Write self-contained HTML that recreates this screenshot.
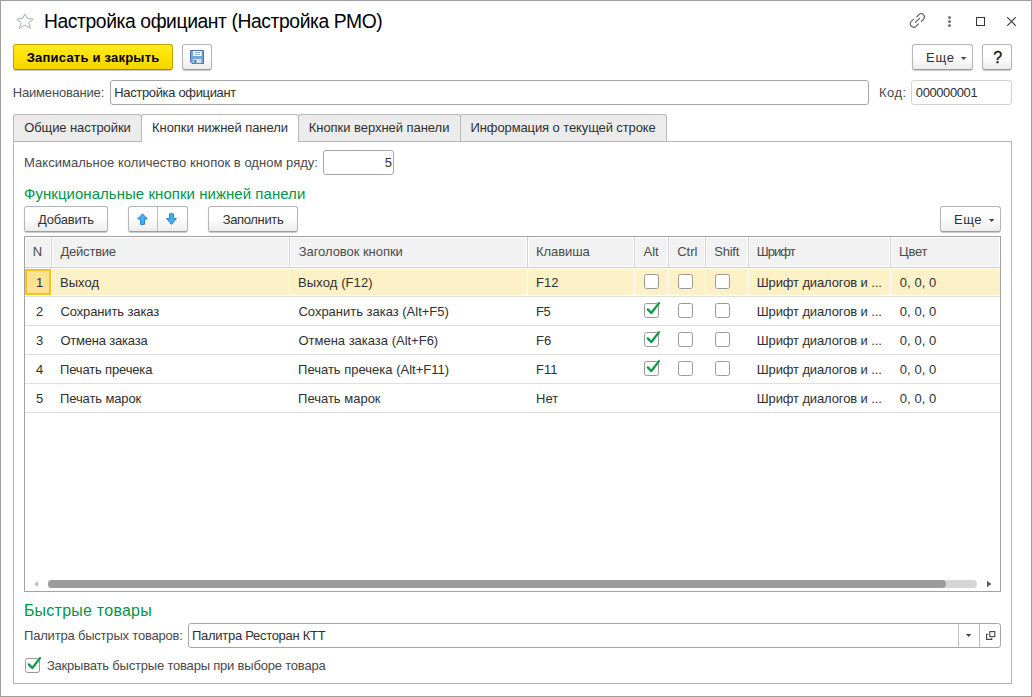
<!DOCTYPE html>
<html lang="ru">
<head>
<meta charset="utf-8">
<title>Настройка официант (Настройка РМО)</title>
<style>
*{box-sizing:border-box;margin:0;padding:0}
html,body{width:1032px;height:697px;overflow:hidden;background:#fff}
body{font-family:"Liberation Sans",Arial,sans-serif;font-size:13px;color:#333;position:relative}
.abs{position:absolute}
.t{position:absolute;white-space:nowrap}
#win{position:absolute;left:0;top:0;width:1032px;height:697px;border:1px solid #a0a0a0;background:#fff}
.btn{position:absolute;border:1px solid #b5b5b5;border-bottom-color:#9d9d9d;border-radius:3px;background:linear-gradient(#fff,#fff 45%,#ececec);box-shadow:0 1px 1px rgba(0,0,0,.22)}
.btn.yellow{background:linear-gradient(#ffea22,#ffe000 50%,#f6d500);border-color:#bfa500;border-bottom-color:#a08a00}
.inp{position:absolute;height:25px;border:1px solid #a6a6a6;border-radius:3px;background:#fff}
.tab{position:absolute;top:114px;height:27px;border:1px solid #b9b9b9;border-bottom:none;border-radius:3px 3px 0 0;background:#ececec}
.tab.act{background:#fff;height:28px}
#panel{position:absolute;left:13px;top:141px;width:999px;height:543px;border:1px solid #b4b4b4;background:#fff}
#tbl{position:absolute;left:24px;top:236px;width:977px;height:356px;border:1px solid #a3a3a3;background:#fff}
.cb{position:absolute;width:15px;height:15px;border:1px solid #999;border-radius:2.5px;background:#fff}
</style>
</head>
<body>
<div id="win"></div>
<svg class="abs" style="left:12px;top:8px" width="28" height="26" viewBox="0 0 28 26"><path d="M12.9 5.9L15 10.2L21.3 11.2L16.6 14.7L18.5 20.4L12.9 17L7.4 20.4L9.3 14.7L4.8 11.2L10.9 10.2Z" fill="#fff" stroke="#a7b0ba" stroke-width="1" stroke-linejoin="miter"/></svg>
<div class="t" style="left:44.02px;top:10px;font-size:19.3px;line-height:24px;color:#000;letter-spacing:-0.397px;">Настройка официант (Настройка РМО)</div>
<svg class="abs" style="left:906px;top:10px" width="24" height="22" viewBox="0 0 24 22" fill="none" stroke="#555" stroke-width="1.05" stroke-linecap="round"><path d="M10.7 6.8L13.2 4.3A3.3 3.3 0 0 1 17.8 8.9L15.3 11.4"/><path d="M7.4 9.3L5.2 11.5A3.4 3.4 0 0 0 10 16.3L12.4 13.9"/><path d="M9.4 12.4L13.5 8.3"/></svg>
<div class="abs" style="left:948px;top:16px;width:3px;height:3px;border-radius:2px;background:#777;box-shadow:0 4px 0 #777,0 8px 0 #777"></div>
<div class="abs" style="left:976px;top:17px;width:9px;height:9px;border:1px solid #333"></div>
<svg class="abs" style="left:1007px;top:17px" width="9" height="9" viewBox="0 0 9 9"><path d="M.2.2l8.6 8.6M8.8.2L.2 8.8" stroke="#333" stroke-width="1.1"/></svg>
<div class="btn yellow" style="left:13px;top:44px;width:160px;height:26px"></div>
<div class="t" style="left:26.71px;top:50px;font-size:13px;line-height:16px;color:#000;letter-spacing:0.219px;font-weight:bold;">Записать и закрыть</div>
<div class="btn" style="left:182px;top:44px;width:30px;height:26px"></div>
<svg class="abs" style="left:190px;top:50px" width="14" height="14" viewBox="0 0 14 14"><path d="M.5.5h13v13H2.2L.5 11.8z" fill="#79a5de" stroke="#3565a8" stroke-width=".9"/><rect x="3" y="1" width="8.5" height="5" fill="#fff"/><path d="M4.5 2.5h5.5M4.5 4.3h5.5" stroke="#7ba3d8" stroke-width="0.9"/><rect x="3.3" y="9" width="8" height="4.2" fill="#d9e0dc"/><rect x="4.3" y="10" width="2" height="3" fill="#3a74bd"/></svg>
<div class="btn" style="left:912px;top:44px;width:61px;height:26px"></div>
<div class="t" style="left:926.03px;top:50px;font-size:13px;line-height:16px;color:#303030;letter-spacing:0.724px;">Еще</div>
<svg class="abs" style="left:960px;top:57px" width="8" height="4" viewBox="0 0 8 4"><path d="M0.9 0H6.4L3.65 3.1z" fill="#444"/></svg>
<div class="btn" style="left:982px;top:44px;width:30px;height:26px"></div>
<div class="t" style="left:993.14px;top:48px;font-size:16px;line-height:20px;color:#111;-webkit-text-stroke:.3px #111;">?</div>
<div class="t" style="left:12.78px;top:85px;font-size:13px;line-height:16px;color:#4a4a4a;letter-spacing:-0.185px;">Наименование:</div>
<div class="inp" style="left:110px;top:80px;width:759px"></div>
<div class="t" style="left:114.23px;top:85px;font-size:13px;line-height:16px;color:#303030;letter-spacing:-0.344px;">Настройка официант</div>
<div class="t" style="left:879.03px;top:85px;font-size:13px;line-height:16px;color:#4a4a4a;letter-spacing:0.468px;">Код:</div>
<div class="inp" style="left:911px;top:80px;width:101px;border-color:#d2d2d2"></div>
<div class="t" style="left:915.84px;top:85px;font-size:13px;line-height:16px;color:#303030;letter-spacing:-0.410px;">000000001</div>
<div id="panel"></div>
<div class="tab" style="left:13px;width:129px"></div>
<div class="tab act" style="left:141px;width:158px"></div>
<div class="tab" style="left:298px;width:163px"></div>
<div class="tab" style="left:460px;width:207px"></div>
<div class="t" style="left:24.23px;top:120px;font-size:13px;line-height:16px;color:#303030;letter-spacing:-0.095px;">Общие настройки</div>
<div class="t" style="left:152.03px;top:120px;font-size:13px;line-height:16px;color:#303030;letter-spacing:-0.061px;">Кнопки нижней панели</div>
<div class="t" style="left:308.78px;top:120px;font-size:13px;line-height:16px;color:#303030;letter-spacing:-0.044px;">Кнопки верхней панели</div>
<div class="t" style="left:470.53px;top:120px;font-size:13px;line-height:16px;color:#303030;letter-spacing:-0.106px;">Информация о текущей строке</div>
<div class="t" style="left:24.03px;top:155px;font-size:13px;line-height:16px;color:#4a4a4a;letter-spacing:0.028px;">Максимальное количество кнопок в одном ряду:</div>
<div class="inp" style="left:323px;top:150px;width:71px"></div>
<div class="t" style="left:384.83px;top:155px;font-size:13px;line-height:16px;color:#303030;">5</div>
<div class="t" style="left:23.99px;top:184px;font-size:15px;line-height:20px;color:#009646;letter-spacing:0.043px;">Функциональные кнопки нижней панели</div>
<div class="btn" style="left:24px;top:206px;width:84px;height:26px"></div>
<div class="t" style="left:38.00px;top:212px;font-size:13px;line-height:16px;color:#303030;letter-spacing:-0.190px;">Добавить</div>
<div class="btn" style="left:128px;top:206px;width:60px;height:26px"></div>
<div style="position:absolute;left:157px;top:207px;width:1px;height:24px;background:#bdbdbd"></div>
<svg class="abs" style="left:135px;top:211px" width="16" height="16" viewBox="0 0 16 16"><path d="M7.5 2.9L12.4 8H9.4V13.4H5.6V8H2.6z" fill="#48b0ef" stroke="#1f80cb" stroke-width="1" stroke-linejoin="miter"/></svg>
<svg class="abs" style="left:164px;top:211px" width="16" height="16" viewBox="0 0 16 16"><path d="M7.5 13.4L2.6 7.6H5.6V2.8H9.4V7.6H12.4z" fill="#48b0ef" stroke="#1f80cb" stroke-width="1" stroke-linejoin="miter"/></svg>
<div class="btn" style="left:208px;top:206px;width:90px;height:26px"></div>
<div class="t" style="left:222.67px;top:212px;font-size:13px;line-height:16px;color:#303030;letter-spacing:-0.343px;">Заполнить</div>
<div class="btn" style="left:940px;top:206px;width:61px;height:26px"></div>
<div class="t" style="left:954.03px;top:212px;font-size:13px;line-height:16px;color:#303030;letter-spacing:0.474px;">Еще</div>
<svg class="abs" style="left:988px;top:219px" width="8" height="4" viewBox="0 0 8 4"><path d="M0.9 0H6.4L3.65 3.1z" fill="#444"/></svg>
<div id="tbl"></div>
<div style="position:absolute;left:25px;top:237px;width:975px;height:30px;background:#fff"></div>
<div style="position:absolute;left:26px;top:238px;width:24px;height:28px;background:#f2f2f2"></div>
<div style="position:absolute;left:53px;top:238px;width:235px;height:28px;background:#f2f2f2"></div>
<div style="position:absolute;left:291px;top:238px;width:235px;height:28px;background:#f2f2f2"></div>
<div style="position:absolute;left:529px;top:238px;width:104px;height:28px;background:#f2f2f2"></div>
<div style="position:absolute;left:636px;top:238px;width:31px;height:28px;background:#f2f2f2"></div>
<div style="position:absolute;left:670px;top:238px;width:34px;height:28px;background:#f2f2f2"></div>
<div style="position:absolute;left:707px;top:238px;width:40px;height:28px;background:#f2f2f2"></div>
<div style="position:absolute;left:750px;top:238px;width:139px;height:28px;background:#f2f2f2"></div>
<div style="position:absolute;left:892px;top:238px;width:107px;height:28px;background:#f2f2f2"></div>
<div style="position:absolute;left:51px;top:237px;width:1px;height:30px;background:#d0d0d0"></div>
<div style="position:absolute;left:289px;top:237px;width:1px;height:30px;background:#d0d0d0"></div>
<div style="position:absolute;left:527px;top:237px;width:1px;height:30px;background:#d0d0d0"></div>
<div style="position:absolute;left:634px;top:237px;width:1px;height:30px;background:#d0d0d0"></div>
<div style="position:absolute;left:668px;top:237px;width:1px;height:30px;background:#d0d0d0"></div>
<div style="position:absolute;left:705px;top:237px;width:1px;height:30px;background:#d0d0d0"></div>
<div style="position:absolute;left:748px;top:237px;width:1px;height:30px;background:#d0d0d0"></div>
<div style="position:absolute;left:890px;top:237px;width:1px;height:30px;background:#d0d0d0"></div>
<div style="position:absolute;left:25px;top:267px;width:975px;height:1px;background:#cfcfcf"></div>
<div class="t" style="left:32.78px;top:244px;font-size:13px;line-height:16px;color:#4a4a4a;">N</div>
<div class="t" style="left:60.50px;top:244px;font-size:13px;line-height:16px;color:#4a4a4a;letter-spacing:-0.225px;">Действие</div>
<div class="t" style="left:298.67px;top:244px;font-size:13px;line-height:16px;color:#4a4a4a;letter-spacing:-0.044px;">Заголовок кнопки</div>
<div class="t" style="left:536.03px;top:244px;font-size:13px;line-height:16px;color:#4a4a4a;letter-spacing:-0.083px;">Клавиша</div>
<div class="t" style="left:643.57px;top:244px;font-size:13px;line-height:16px;color:#4a4a4a;letter-spacing:-0.075px;">Alt</div>
<div class="t" style="left:677.19px;top:244px;font-size:13px;line-height:16px;color:#4a4a4a;letter-spacing:-0.013px;">Ctrl</div>
<div class="t" style="left:714.26px;top:244px;font-size:13px;line-height:16px;color:#4a4a4a;letter-spacing:-0.232px;">Shift</div>
<div class="t" style="left:756.78px;top:244px;font-size:13px;line-height:16px;color:#4a4a4a;letter-spacing:-0.967px;">Шрифт</div>
<div class="t" style="left:899.03px;top:244px;font-size:13px;line-height:16px;color:#4a4a4a;letter-spacing:-0.256px;">Цвет</div>
<div style="position:absolute;left:25px;top:296px;width:975px;height:1px;background:#e0e0e0"></div>
<div style="position:absolute;left:25px;top:325px;width:975px;height:1px;background:#e0e0e0"></div>
<div style="position:absolute;left:25px;top:354px;width:975px;height:1px;background:#e0e0e0"></div>
<div style="position:absolute;left:25px;top:383px;width:975px;height:1px;background:#e0e0e0"></div>
<div style="position:absolute;left:25px;top:412px;width:975px;height:1px;background:#e0e0e0"></div>
<div style="position:absolute;left:25px;top:269px;width:975px;height:26px;background:#fdf1c8"></div>
<div style="position:absolute;left:51px;top:269px;width:1px;height:26px;background:#fff"></div>
<div style="position:absolute;left:289px;top:269px;width:1px;height:26px;background:#fff"></div>
<div style="position:absolute;left:527px;top:269px;width:1px;height:26px;background:#fff"></div>
<div style="position:absolute;left:634px;top:269px;width:1px;height:26px;background:#fff"></div>
<div style="position:absolute;left:668px;top:269px;width:1px;height:26px;background:#fff"></div>
<div style="position:absolute;left:705px;top:269px;width:1px;height:26px;background:#fff"></div>
<div style="position:absolute;left:748px;top:269px;width:1px;height:26px;background:#fff"></div>
<div style="position:absolute;left:890px;top:269px;width:1px;height:26px;background:#fff"></div>
<div style="position:absolute;left:25px;top:269px;width:26px;height:26px;background:#fde293;border:2px solid #f7c31b"></div>
<div class="t" style="left:36.01px;top:275px;font-size:13px;line-height:16px;color:#303030;">1</div>
<div class="t" style="left:60.03px;top:275px;font-size:13px;line-height:16px;color:#303030;letter-spacing:0.027px;">Выход</div>
<div class="t" style="left:298.03px;top:275px;font-size:13px;line-height:16px;color:#303030;letter-spacing:0.102px;">Выход (F12)</div>
<div class="t" style="left:536.03px;top:275px;font-size:13px;line-height:16px;color:#303030;letter-spacing:-0.015px;">F12</div>
<div class="t" style="left:756.78px;top:275px;font-size:13px;line-height:16px;color:#303030;letter-spacing:-0.124px;">Шрифт диалогов и ...</div>
<div class="t" style="left:899.84px;top:275px;font-size:13px;line-height:16px;color:#303030;letter-spacing:0.046px;">0, 0, 0</div>
<div class="cb" style="left:644px;top:274px"></div>
<div class="cb" style="left:678px;top:274px"></div>
<div class="cb" style="left:715px;top:274px"></div>
<div class="t" style="left:35.95px;top:304px;font-size:13px;line-height:16px;color:#303030;">2</div>
<div class="t" style="left:60.44px;top:304px;font-size:13px;line-height:16px;color:#303030;letter-spacing:-0.116px;">Сохранить заказ</div>
<div class="t" style="left:298.44px;top:304px;font-size:13px;line-height:16px;color:#303030;letter-spacing:-0.011px;">Сохранить заказ (Alt+F5)</div>
<div class="t" style="left:536.03px;top:304px;font-size:13px;line-height:16px;color:#303030;letter-spacing:-0.409px;">F5</div>
<div class="t" style="left:756.78px;top:304px;font-size:13px;line-height:16px;color:#303030;letter-spacing:-0.124px;">Шрифт диалогов и ...</div>
<div class="t" style="left:899.84px;top:304px;font-size:13px;line-height:16px;color:#303030;letter-spacing:0.046px;">0, 0, 0</div>
<div class="cb" style="left:644px;top:303px"></div>
<svg class="abs" style="left:644px;top:300px" width="18" height="18" viewBox="0 0 18 18"><path d="M3.8 9.4L7.3 13L15 3.1" fill="none" stroke="#0c9a47" stroke-width="2.3" stroke-linecap="round" stroke-linejoin="round"/></svg>
<div class="cb" style="left:678px;top:303px"></div>
<div class="cb" style="left:715px;top:303px"></div>
<div class="t" style="left:36.10px;top:333px;font-size:13px;line-height:16px;color:#303030;">3</div>
<div class="t" style="left:60.48px;top:333px;font-size:13px;line-height:16px;color:#303030;letter-spacing:-0.211px;">Отмена заказа</div>
<div class="t" style="left:298.48px;top:333px;font-size:13px;line-height:16px;color:#303030;letter-spacing:-0.009px;">Отмена заказа (Alt+F6)</div>
<div class="t" style="left:536.03px;top:333px;font-size:13px;line-height:16px;color:#303030;">F6</div>
<div class="t" style="left:756.78px;top:333px;font-size:13px;line-height:16px;color:#303030;letter-spacing:-0.124px;">Шрифт диалогов и ...</div>
<div class="t" style="left:899.84px;top:333px;font-size:13px;line-height:16px;color:#303030;letter-spacing:0.046px;">0, 0, 0</div>
<div class="cb" style="left:644px;top:332px"></div>
<svg class="abs" style="left:644px;top:329px" width="18" height="18" viewBox="0 0 18 18"><path d="M3.8 9.4L7.3 13L15 3.1" fill="none" stroke="#0c9a47" stroke-width="2.3" stroke-linecap="round" stroke-linejoin="round"/></svg>
<div class="cb" style="left:678px;top:332px"></div>
<div class="cb" style="left:715px;top:332px"></div>
<div class="t" style="left:35.90px;top:362px;font-size:13px;line-height:16px;color:#303030;">4</div>
<div class="t" style="left:60.05px;top:362px;font-size:13px;line-height:16px;color:#303030;letter-spacing:-0.164px;">Печать пречека</div>
<div class="t" style="left:298.05px;top:362px;font-size:13px;line-height:16px;color:#303030;">Печать пречека (Alt+F11)</div>
<div class="t" style="left:536.03px;top:362px;font-size:13px;line-height:16px;color:#303030;">F11</div>
<div class="t" style="left:756.78px;top:362px;font-size:13px;line-height:16px;color:#303030;letter-spacing:-0.124px;">Шрифт диалогов и ...</div>
<div class="t" style="left:899.84px;top:362px;font-size:13px;line-height:16px;color:#303030;letter-spacing:0.046px;">0, 0, 0</div>
<div class="cb" style="left:644px;top:361px"></div>
<svg class="abs" style="left:644px;top:358px" width="18" height="18" viewBox="0 0 18 18"><path d="M3.8 9.4L7.3 13L15 3.1" fill="none" stroke="#0c9a47" stroke-width="2.3" stroke-linecap="round" stroke-linejoin="round"/></svg>
<div class="cb" style="left:678px;top:361px"></div>
<div class="cb" style="left:715px;top:361px"></div>
<div class="t" style="left:36.08px;top:391px;font-size:13px;line-height:16px;color:#303030;">5</div>
<div class="t" style="left:60.05px;top:391px;font-size:13px;line-height:16px;color:#303030;letter-spacing:-0.122px;">Печать марок</div>
<div class="t" style="left:298.05px;top:391px;font-size:13px;line-height:16px;color:#303030;">Печать марок</div>
<div class="t" style="left:536.03px;top:391px;font-size:13px;line-height:16px;color:#303030;">Нет</div>
<div class="t" style="left:756.78px;top:391px;font-size:13px;line-height:16px;color:#303030;letter-spacing:-0.124px;">Шрифт диалогов и ...</div>
<div class="t" style="left:899.84px;top:391px;font-size:13px;line-height:16px;color:#303030;letter-spacing:0.046px;">0, 0, 0</div>
<div style="position:absolute;left:48px;top:580px;width:929px;height:8px;background:#d6d6d6;border-radius:4px"></div>
<div style="position:absolute;left:48px;top:580px;width:898px;height:8px;background:#9b9b9b;border-radius:4px"></div>
<svg class="abs" style="left:34px;top:581px" width="5" height="6" viewBox="0 0 5 6"><path d="M4 0V6L0 3z" fill="#c2c2c2"/></svg>
<svg class="abs" style="left:987px;top:581px" width="5" height="6" viewBox="0 0 5 6"><path d="M0 0V6L4.4 3z" fill="#555"/></svg>
<div class="t" style="left:23.89px;top:601px;font-size:16px;line-height:20px;color:#009646;letter-spacing:0.241px;">Быстрые товары</div>
<div class="t" style="left:24.05px;top:628px;font-size:13px;line-height:16px;color:#4a4a4a;letter-spacing:-0.197px;">Палитра быстрых товаров:</div>
<div class="inp" style="left:188px;top:623px;width:813px"></div>
<div class="t" style="left:192.05px;top:628px;font-size:13px;line-height:16px;color:#303030;letter-spacing:-0.289px;">Палитра Ресторан КТТ</div>
<div style="position:absolute;left:958px;top:624px;width:1px;height:23px;background:#bdbdbd"></div>
<div style="position:absolute;left:979px;top:624px;width:1px;height:23px;background:#bdbdbd"></div>
<svg class="abs" style="left:965px;top:634px" width="8" height="4" viewBox="0 0 8 4"><path d="M0.9 0H6.4L3.65 3.1z" fill="#444"/></svg>
<svg class="abs" style="left:985px;top:630px" width="12" height="12" viewBox="0 0 12 12" fill="none" stroke="#444" stroke-width="1.1"><rect x="4.8" y="1.6" width="5" height="5"/><path d="M3.3 4.3H1.6V9.4H6.8V7.8"/></svg>
<div class="cb" style="left:25px;top:658px"></div>
<svg class="abs" style="left:25px;top:655px" width="18" height="18" viewBox="0 0 18 18"><path d="M3.8 9.4L7.3 13L15 3.1" fill="none" stroke="#0c9a47" stroke-width="2.3" stroke-linecap="round" stroke-linejoin="round"/></svg>
<div class="t" style="left:46.92px;top:658px;font-size:13px;line-height:16px;color:#4a4a4a;letter-spacing:-0.197px;">Закрывать быстрые товары при выборе товара</div>
</body>
</html>
